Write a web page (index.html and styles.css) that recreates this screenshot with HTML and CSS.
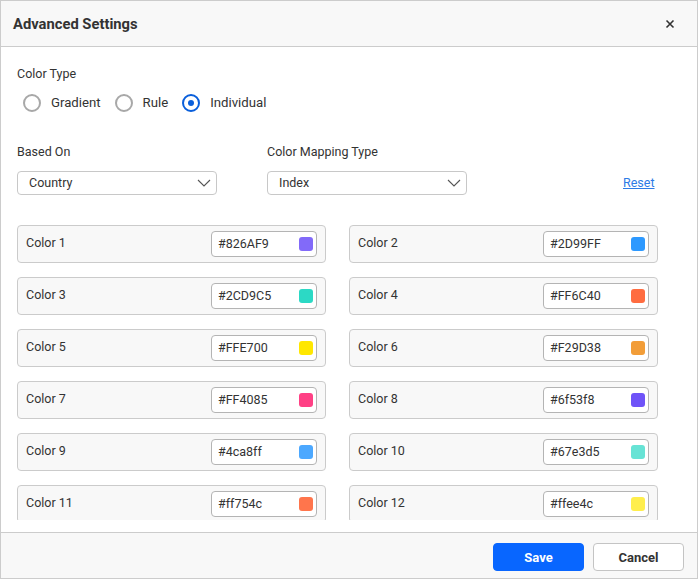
FILE: index.html
```html
<!DOCTYPE html>
<html>
<head>
<meta charset="utf-8">
<link rel="stylesheet" href="styles.css">
</head>
<body>
<div class="dialog">
  <div class="header">
    <div class="title">Advanced Settings</div>
    <svg class="close" width="10" height="10" viewBox="0 0 10 10"><path d="M1.5 1.5 L8.5 8.5 M8.5 1.5 L1.5 8.5" stroke="#333" stroke-width="1.6" fill="none"/></svg>
  </div>
  <div class="body">
    <div class="scroll">
      <div class="label">Color Type</div>
      <div class="radios">
        <div class="radio"><span class="ring"></span><span>Gradient</span></div>
        <div class="radio"><span class="ring"></span><span>Rule</span></div>
        <div class="radio"><span class="ring on"></span><span>Individual</span></div>
      </div>
      <div class="fields">
        <div class="field">
          <div class="label">Based On</div>
          <div class="select"><span>Country</span><svg width="14" height="8" viewBox="0 0 14 8"><path d="M1 1 L7 7 L13 1" stroke="#555" stroke-width="1.1" fill="none"/></svg></div>
        </div>
        <div class="field">
          <div class="label">Color Mapping Type</div>
          <div class="select"><span>Index</span><svg width="14" height="8" viewBox="0 0 14 8"><path d="M1 1 L7 7 L13 1" stroke="#555" stroke-width="1.1" fill="none"/></svg></div>
        </div>
        <a class="reset">Reset</a>
      </div>
      <div class="grid">
        <div class="card"><span>Color 1</span><div class="input"><span>#826AF9</span><i class="sw" style="background:#826AF9"></i></div></div>
        <div class="card"><span>Color 2</span><div class="input"><span>#2D99FF</span><i class="sw" style="background:#2D99FF"></i></div></div>
        <div class="card"><span>Color 3</span><div class="input"><span>#2CD9C5</span><i class="sw" style="background:#2CD9C5"></i></div></div>
        <div class="card"><span>Color 4</span><div class="input"><span>#FF6C40</span><i class="sw" style="background:#FF6C40"></i></div></div>
        <div class="card"><span>Color 5</span><div class="input"><span>#FFE700</span><i class="sw" style="background:#FFE700"></i></div></div>
        <div class="card"><span>Color 6</span><div class="input"><span>#F29D38</span><i class="sw" style="background:#F29D38"></i></div></div>
        <div class="card"><span>Color 7</span><div class="input"><span>#FF4085</span><i class="sw" style="background:#FF4085"></i></div></div>
        <div class="card"><span>Color 8</span><div class="input"><span>#6f53f8</span><i class="sw" style="background:#6f53f8"></i></div></div>
        <div class="card"><span>Color 9</span><div class="input"><span>#4ca8ff</span><i class="sw" style="background:#4ca8ff"></i></div></div>
        <div class="card"><span>Color 10</span><div class="input"><span>#67e3d5</span><i class="sw" style="background:#67e3d5"></i></div></div>
        <div class="card"><span>Color 11</span><div class="input"><span>#ff754c</span><i class="sw" style="background:#ff754c"></i></div></div>
        <div class="card"><span>Color 12</span><div class="input"><span>#ffee4c</span><i class="sw" style="background:#ffee4c"></i></div></div>
      </div>
    </div>
  </div>
  <div class="footer">
    <button class="btn primary">Save</button>
    <button class="btn">Cancel</button>
  </div>
</div>
</body>
</html>
```
FILE: styles.css
```css
* { box-sizing: border-box; }
html, body { margin: 0; padding: 0; background: #fff; }
body { font-family: Roboto, "Liberation Sans", sans-serif; color: #333; font-size: 13px; }
.dialog {
  width: 698px; height: 579px;
  border: 1px solid #cccccc;
  display: flex; flex-direction: column;
  background: #fff;
}
.header {
  height: 46px; flex: none;
  background: #f8f8f8;
  border-bottom: 1px solid #cccccc;
  display: flex; align-items: center; justify-content: space-between;
  padding: 0 22px 0 12px;
}
.title { font-size: 14.75px; font-weight: 700; color: #333; line-height: 16px; padding-top: 1px; }
.close { display: block; margin-top: 1px; }
.body { height: 485px; flex: none; padding: 0 0 12px 16px; }
.scroll { height: 473px; overflow: hidden; padding-top: 19px; }
.label { font-size: 12.5px; line-height: 16px; color: #333; }
.radios { display: flex; gap: 14px; margin-top: 12px; padding-left: 6px; height: 18px; }
.radio { display: flex; align-items: center; gap: 10px; font-size: 13.2px; line-height: 18px; }
.ring {
  width: 18px; height: 18px; border-radius: 50%;
  border: 2px solid #a8a8a8; background: #fff;
  display: flex; align-items: center; justify-content: center;
}
.ring.on { border-color: #0a5fdb; }
.ring.on::after { content: ""; width: 6px; height: 6px; border-radius: 50%; background: #0a5fdb; }
.fields { display: flex; margin-top: 32px; align-items: flex-end; }
.field { width: 200px; margin-right: 50px; display: flex; flex-direction: column; gap: 11px; }
.select {
  height: 24px; border: 1px solid #c8c8c8; border-radius: 4px;
  display: flex; align-items: center; justify-content: space-between;
  padding: 0 5px 0 11px; font-size: 12.5px; line-height: 16px; background: #fff;
}
.select svg { display: block; }
.reset {
  margin-left: 106px; color: #2d7be6; text-decoration: underline;
  font-size: 12.5px; line-height: 24px; height: 24px;
}
.grid {
  display: grid; grid-template-columns: 309px 309px; column-gap: 23px; row-gap: 14px;
  margin-top: 30px; padding-left: 0;
}
.card {
  height: 38px; background: #f8f8f8; border: 1px solid #cbcbcb; border-radius: 4px;
  display: flex; align-items: center; justify-content: space-between;
  padding: 0 8px 0 8px; font-size: 12.5px; line-height: 16px;
}
.card > span { margin-top: -2px; }
.input {
  width: 106px; height: 26px; background: #fff; border: 1px solid #b4b4b4; border-radius: 4px;
  display: flex; align-items: center; justify-content: space-between;
  padding: 0 3px 0 6px; font-size: 12.5px;
}
.sw { display: block; width: 14px; height: 14px; border-radius: 3px; }
.footer {
  flex: 1; background: #f8f8f8; border-top: 1px solid #cccccc;
  display: flex; justify-content: flex-end; align-items: flex-start;
  gap: 9px; padding: 10px 13px 0 0;
}
.btn {
  width: 91px; height: 28px; border-radius: 4px; border: 1px solid #c4c4c4;
  background: #fff; color: #333; font-family: Roboto, "Liberation Sans", sans-serif;
  font-size: 13px; font-weight: 700; padding: 0;
}
.btn.primary { background: #0866ff; border-color: #0866ff; color: #fff; }
```
